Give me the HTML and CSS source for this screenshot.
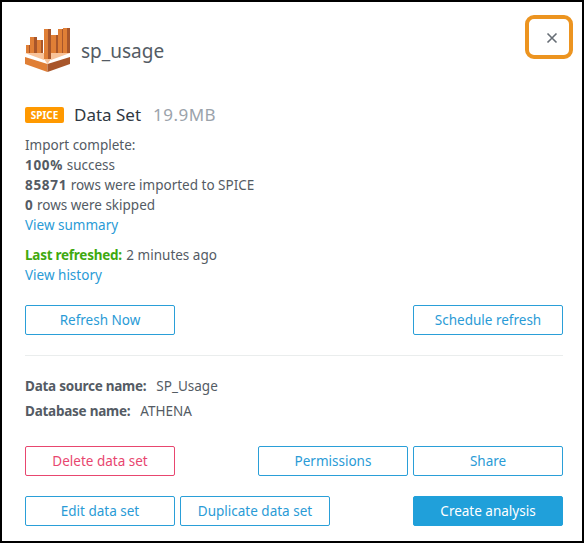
FILE: index.html
```html
<!DOCTYPE html>
<html lang="en">
    <head>
        <meta charset="UTF-8">
        <meta name="viewport" content="width=device-width, initial-scale=1.0">
        <link rel="stylesheet" href="styles.css">
        <title>sp_usage</title>
    </head>
    <body>
        <div class="panel">
            <button class="close" aria-label="Close">
                <svg width="12" height="12" viewBox="0 0 12 12"><path d="M1.500 1.500 10.500 10.500M10.500 1.500 1.500 10.500" stroke="#666d75" stroke-width="1.6" fill="none"/></svg>
            </button>
            <div class="title-row">
                <svg class="logo" width="46" height="46" viewBox="0 0 46 46">
                    <path d="M1 18h3v8H1z" fill="#e07f36"/><path d="M4 18h1v8H4z" fill="#a8562b"/>
                    <path d="M5 10h4v16H5z" fill="#e07f36"/><path d="M9 10h3v16H9z" fill="#a8562b"/>
                    <path d="M12 13h4v14h-4z" fill="#e07f36"/><path d="M16 13h2v14h-2z" fill="#a8562b"/>
                    <path d="M19 2h4v30h-4z" fill="#e07f36"/><path d="M23 2h3v30h-3z" fill="#a8562b"/>
                    <path d="M26 8h5v20h-5z" fill="#e07f36"/><path d="M31 8h2v20h-2z" fill="#a8562b"/>
                    <path d="M33 2h4v24h-4z" fill="#e07f36"/><path d="M37 2h1v24h-1z" fill="#a8562b"/>
                    <path d="M38 1h4v25h-4z" fill="#e07f36"/><path d="M42 1h3v25h-3z" fill="#a8562b"/>
                    <path d="M0 26H19V33ZM45 26H26V33Z" fill="#f8c39a"/>
                    <path d="M19 32 26 32 22.500 37Z" fill="#f8c39a"/>
                    <path d="M0 30 22.500 37V45L0 37z" fill="#e07f36"/>
                    <path d="M45 30 22.500 37V45L45 37z" fill="#a8562b"/>
                </svg>
                <h1>sp_usage</h1>
            </div>
            <div class="type-row">
                <span class="badge">SPICE</span>
                <span class="type-name">Data Set</span>
                <span class="size">19.9MB</span>
            </div>
            <div class="status">
                <div>Import complete:</div>
                <div><b class="num">100%</b> success</div>
                <div><b class="num">85871</b> rows were imported to SPICE</div>
                <div><b class="num">0</b> rows were skipped</div>
                <div><a href="#">View summary</a></div>
            </div>
            <div class="refresh-info">
                <div><b class="ok">Last refreshed:</b> 2 minutes ago</div>
                <div><a href="#">View history</a></div>
            </div>
            <div class="btn-row first-row">
                <button class="btn">Refresh Now</button>
                <button class="btn push">Schedule refresh</button>
            </div>
            <hr>
            <div class="source">
                <div><b>Data source name:</b><span>SP_Usage</span></div>
                <div><b>Database name:</b><span>ATHENA</span></div>
            </div>
            <div class="btn-row delete-row">
                <button class="btn danger">Delete data set</button>
                <button class="btn push">Permissions</button>
                <button class="btn">Share</button>
            </div>
            <div class="btn-row last-row">
                <button class="btn">Edit data set</button>
                <button class="btn">Duplicate data set</button>
                <button class="btn primary push">Create analysis</button>
            </div>
        </div>
    </body>
</html>
```

FILE: styles.css
```css
html, body {
    margin: 0;
    background: #000;
}

.panel {
    position: relative;
    box-sizing: border-box;
    width: 580px;
    height: 539px;
    margin: 2px;
    padding: 0 19px 0 23px;
    background: #fff;
    color: #545b64;
    font-family: "Noto Sans", sans-serif;
    font-size: 13.5px;
    line-height: 20px;
}

a {
    color: #2a9bd6;
    text-decoration: none;
}

b {
    font-weight: 700;
    letter-spacing: -0.25px;
}

b.num {
    letter-spacing: 0.7px;
}

.close {
    position: absolute;
    left: 523px;
    top: 13px;
    box-sizing: border-box;
    width: 48px;
    height: 44px;
    padding: 1px 0 0 6px;
    display: flex;
    align-items: center;
    justify-content: center;
    background: #fff;
    border: 4px solid #ec9420;
    border-radius: 9px;
}

.title-row {
    display: flex;
    align-items: center;
    padding-top: 25px;
    height: 46px;
}

.logo {
    margin-right: 10px;
}

h1 {
    margin: 2px 0 0;
    font-size: 19px;
    font-weight: 400;
    color: #545b64;
}

.type-row {
    display: flex;
    align-items: center;
    margin-top: 31px;
    height: 22px;
}

.badge {
    width: 39px;
    height: 16px;
    line-height: 16px;
    margin-right: 10px;
    background: #ff9900;
    border-radius: 2px;
    color: #fff;
    font-size: 10px;
    font-weight: 700;
    text-align: center;
}

.type-name {
    font-size: 17px;
    color: #2f3842;
    margin-right: 12px;
}

.size {
    font-size: 17px;
    letter-spacing: 0.45px;
    color: #9ba3ab;
}

.status {
    margin-top: 9px;
}

.refresh-info {
    margin-top: 10px;
}

.ok {
    color: #3fa90f;
    margin-right: 1px;
}

.btn-row {
    display: flex;
    gap: 5px;
}

.first-row {
    margin-top: 20px;
}

.delete-row {
    margin-top: 22px;
}

.last-row {
    margin-top: 20px;
}

.btn {
    box-sizing: border-box;
    width: 150px;
    height: 30px;
    padding: 0;
    background: #fff;
    border: 1px solid #2a9fd8;
    border-radius: 2px;
    color: #2a9bd6;
    font-family: inherit;
    font-size: 13.5px;
}

.push {
    margin-left: auto;
}

.danger {
    border-color: #e8466f;
    color: #e8466f;
}

.primary {
    background: #20a0da;
    border-color: #20a0da;
    color: #fff;
}

hr {
    margin: 20px 0 0;
    border: 0;
    border-top: 1px solid #eaeded;
}

.source {
    margin-top: 18px;
}

.source div {
    height: 25px;
    line-height: 25px;
}

.source span {
    margin-left: 10px;
}
```
